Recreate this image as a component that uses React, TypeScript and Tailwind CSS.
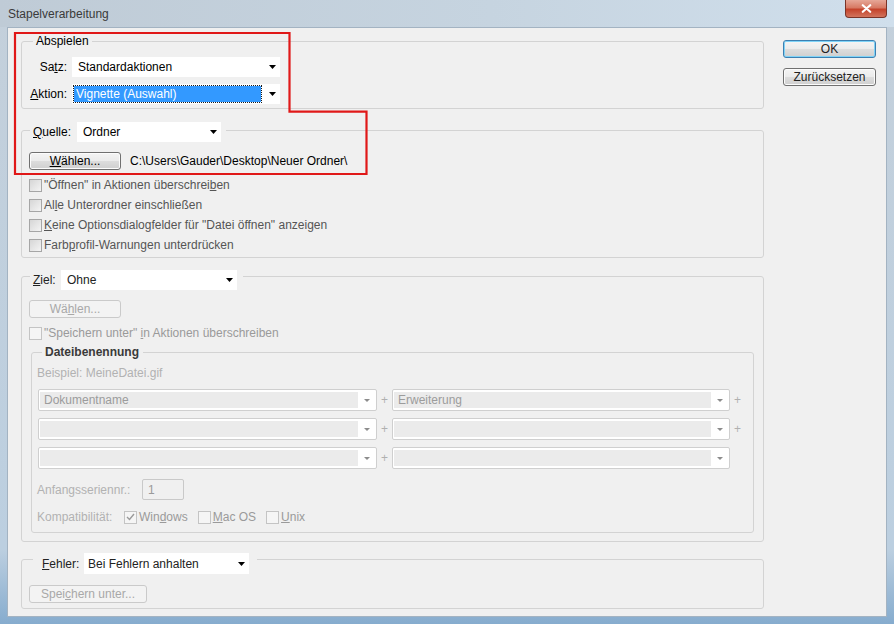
import React from 'react';

const PATH = 'C:\\Users\\Gauder\\Desktop\\Neuer Ordner\\';

function Arrow({ color = '#000', small = false }: { color?: string; small?: boolean }) {
  return small ? (
    <svg width="6" height="3" viewBox="0 0 6 3">
      <path d="M0 0h6L3 3z" fill={color} />
    </svg>
  ) : (
    <svg width="7" height="4" viewBox="0 0 7 4">
      <path d="M0 0h7L3.5 4z" fill={color} />
    </svg>
  );
}

// white photoshop-style combo box
function Combo({ value, className = '', textCls = 'pl-[6px]' }: { value: React.ReactNode; className?: string; textCls?: string }) {
  return (
    <div className={`flex items-center bg-white ${className}`}>
      <span className={`flex-1 truncate ${textCls}`}>{value}</span>
      <span className="flex pr-[4px]">
        <Arrow />
      </span>
    </div>
  );
}

// greyed combo used in the file naming rows
function DimCombo({ value = '', className = '' }: { value?: string; className?: string }) {
  return (
    <div className={`flex h-[22px] rounded-[2px] border border-[#cfcfcf] bg-white px-[1px] py-[2px] ${className}`}>
      <div className="flex flex-1 items-center bg-[#ebebeb] pl-[4px] text-[#9c9c9c]">{value}</div>
      <div className="flex w-[17px] items-center justify-center">
        <Arrow color="#8c8c8c" small />
      </div>
    </div>
  );
}

function Plus({ show = true }: { show?: boolean }) {
  return <span className="w-[15px] text-center text-[#b0b0b0]">{show ? '+' : ''}</span>;
}

function Button({ children, className = '', dim = false }: { children: React.ReactNode; className?: string; dim?: boolean }) {
  return dim ? (
    <div className={`flex h-[18px] items-center justify-center rounded-[3px] border border-[#cacaca] bg-[#f3f3f3] text-[#a8a8a8] ${className}`}>
      {children}
    </div>
  ) : (
    <div
      className={`flex h-[18px] items-center justify-center rounded-[3px] border border-[#707070] bg-[linear-gradient(180deg,#f4f4f4_0%,#ebebeb_50%,#dddddd_51%,#cfcfcf_100%)] shadow-[inset_0_0_0_1px_#fcfcfc] ${className}`}
    >
      {children}
    </div>
  );
}

function Check({ label, dim = false, checked = false, className = '' }: { label: React.ReactNode; dim?: boolean; checked?: boolean; className?: string }) {
  return (
    <div className={`flex items-center gap-[2px] ${className}`}>
      <span
        className={`flex h-[13px] w-[13px] items-center justify-center border ${
          dim ? 'border-[#c4c4c4] bg-[#f5f5f5]' : 'border-[#a6a6a6] bg-[linear-gradient(135deg,#d6d6d6_0%,#f4f4f4_100%)]'
        }`}
      >
        {checked && (
          <svg width="9" height="8" viewBox="0 0 9 8">
            <path d="M1 4l2.5 2.5L8 1" fill="none" stroke="#9a9a9a" strokeWidth="1.4" />
          </svg>
        )}
      </span>
      <span className={dim ? 'text-[#9a9a9a]' : 'text-[#555]'}>{label}</span>
    </div>
  );
}

function Group({ head, headCls, className = '', children }: { head: React.ReactNode; headCls: string; className?: string; children: React.ReactNode }) {
  return (
    <div className={`rounded-[3px] border border-[#d3d3d3] ${className}`}>
      <div className={`flex w-fit items-center bg-[#f0f0f0] ${headCls}`}>{head}</div>
      {children}
    </div>
  );
}

export default function App() {
  return (
    <div className="relative h-[624px] w-[894px] overflow-hidden bg-[linear-gradient(180deg,#c4d0db_0%,#bccfe0_88%,#86acce_100%)] px-[7px] pb-[7px] font-['Liberation_Sans',Arial,sans-serif] text-[12px] leading-[14px] text-black">
      {/* title bar */}
      <div className="-mx-[7px] flex h-[27px] items-start justify-between bg-[linear-gradient(90deg,#bfcbd6_0%,#c6d4e0_55%,#d0dfec_100%)] px-[7px]">
        <span className="pl-[1px] pt-[7px] text-[#3a3a3a]">Stapelverarbeitung</span>
        <div className="flex h-[18px] w-[42px] items-center justify-center rounded-b-[4px] border border-t-0 border-[#7a3428] bg-[linear-gradient(180deg,#e6a797_0%,#d77a64_45%,#c4432b_55%,#d2745d_100%)]">
          <svg width="11" height="9" viewBox="0 0 11 9">
            <path d="M1.8 1.2l7.4 6.6M9.2 1.2L1.8 7.8" stroke="#fff" strokeWidth="2.2" strokeLinecap="round" />
          </svg>
        </div>
      </div>

      {/* client area */}
      <div className="flex h-[590px] border border-[#a3b3c2] bg-[#f0f0f0]">
        <div className="w-[756px] pl-[13px] pt-[13px]">
          {/* Abspielen */}
          <Group head={<span>Abspielen</span>} headCls="-mt-[8px] ml-[11px] px-[3px]" className="pb-[4px]">
            <div className="mt-[9px] flex flex-col gap-[7px] pl-[7px]">
              <div className="flex items-center gap-[5px]">
                <span className="w-[38px] text-right">
                  Sa<u>t</u>z:
                </span>
                <Combo value="Standardaktionen" className="h-[20px] w-[208px]" />
              </div>
              <div className="flex items-center gap-[5px]">
                <span className="w-[38px] text-right">
                  <u>A</u>ktion:
                </span>
                <div className="flex h-[20px] w-[208px] items-center bg-white pl-[2px]">
                  <span className="flex h-[16px] w-[187px] items-center bg-[#3399ff] pl-[2px] text-white outline outline-1 outline-dotted outline-[#1a1a1a]">
                    Vignette (Auswahl)
                  </span>
                  <span className="ml-auto flex pr-[4px]">
                    <Arrow />
                  </span>
                </div>
              </div>
            </div>
          </Group>

          {/* Quelle */}
          <Group
            className="mt-[21px] pb-[2px]"
            headCls="-mt-[9px] ml-[8px] pl-[3px] pr-[5px]"
            head={
              <>
                <span className="w-[44px]">
                  <u>Q</u>uelle:
                </span>
                <Combo value="Ordner" className="h-[20px] w-[144px]" textCls="pl-[6px]" />
              </>
            }
          >
            <div className="pl-[7px]">
              <div className="mt-[10px] flex items-center">
                <Button className="w-[92px]">
                  <span>
                    <u>W</u>ählen...
                  </span>
                </Button>
                <span className="ml-[9px]">{PATH}</span>
              </div>
              <div className="mt-[5px] flex flex-col">
                <Check className="h-[20px]" label={<>"Öffnen" in Aktionen überschrei<u>b</u>en</>} />
                <Check className="h-[20px]" label={<>Al<u>l</u>e Unterordner einschließen</>} />
                <Check className="h-[20px]" label={<><u>K</u>eine Optionsdialogfelder für "Datei öffnen" anzeigen</>} />
                <Check className="h-[20px]" label={<>Farb<u>p</u>rofil-Warnungen unterdrücken</>} />
              </div>
            </div>
          </Group>

          {/* Ziel */}
          <Group
            className="mt-[18px] pb-[8px]"
            headCls="-mt-[7px] ml-[8px] pl-[3px] pr-[6px]"
            head={
              <>
                <span className="w-[28px] text-[#222]">
                  <u>Z</u>iel:
                </span>
                <Combo value="Ohne" className="h-[20px] w-[176px] text-[#222]" />
              </>
            }
          >
            <div className="pl-[7px]">
              <Button dim className="mt-[10px] w-[92px]">
                <span>
                  Wä<u>h</u>len...
                </span>
              </Button>
              <Check dim className="mt-[5px] h-[20px]" label={<>"Speichern unter" <u>i</u>n Aktionen überschreiben</>} />
            </div>

            {/* Dateibenennung */}
            <Group
              className="mx-[9px] mt-[9px] pb-[8px]"
              headCls="-mt-[8px] ml-[10px] pl-[3px] pr-[4px]"
              head={<span className="font-semibold text-[#3a3a3a]">Dateibenennung</span>}
            >
              <div className="pl-[5px]">
                <div className="mt-[7px] text-[#b2b2b2]">Beispiel: MeineDatei.gif</div>
                <div className="ml-[1px] mt-[9px] flex flex-col gap-[7px]">
                  <div className="flex items-center">
                    <DimCombo value="Dokumentname" className="w-[339px]" />
                    <Plus />
                    <DimCombo value="Erweiterung" className="w-[338px]" />
                    <Plus />
                  </div>
                  <div className="flex items-center">
                    <DimCombo className="w-[339px]" />
                    <Plus />
                    <DimCombo className="w-[338px]" />
                    <Plus />
                  </div>
                  <div className="flex items-center">
                    <DimCombo className="w-[339px]" />
                    <Plus />
                    <DimCombo className="w-[338px]" />
                  </div>
                </div>
                <div className="mt-[10px] flex items-center">
                  <span className="w-[105px] text-[#b2b2b2]">Anfangsseriennr.:</span>
                  <div className="flex h-[21px] w-[42px] items-center rounded-[2px] border border-[#c9c9c9] pl-[5px] text-[#9a9a9a]">1</div>
                </div>
                <div className="mt-[10px] flex h-[14px] items-center">
                  <span className="w-[87px] text-[#b2b2b2]">Kompatibilität:</span>
                  <Check dim checked label={<>Win<u>d</u>ows</>} />
                  <Check dim className="ml-[10px]" label={<><u>M</u>ac OS</>} />
                  <Check dim className="ml-[10px]" label={<><u>U</u>nix</>} />
                </div>
              </div>
            </Group>
          </Group>

          {/* Fehler */}
          <Group
            className="mt-[17px] pb-[5px]"
            headCls="-mt-[7px] ml-[11px] pl-[9px] pr-[8px]"
            head={
              <>
                <span className="w-[42px] text-[#222]">
                  <u>F</u>ehler:
                </span>
                <Combo value="Bei Fehlern anhalten" className="h-[21px] w-[165px] text-[#222]" textCls="pl-[4px]" />
              </>
            }
          >
            <div className="pl-[7px]">
              <Button dim className="mt-[11px] w-[118px]">
                <span>
                  Spei<u>c</u>hern unter...
                </span>
              </Button>
            </div>
          </Group>
        </div>

        {/* dialog buttons */}
        <div className="ml-[19px] w-[93px] pt-[12px] text-[#222]">
          <div className="flex h-[18px] items-center justify-center rounded-[3px] border border-[#3c7fb1] bg-[linear-gradient(180deg,#f4f4f4_0%,#ebebeb_50%,#dddddd_51%,#cfcfcf_100%)] shadow-[inset_0_0_0_1px_#7fd3f7]">
            OK
          </div>
          <Button className="mt-[10px]">Zurücksetzen</Button>
        </div>
      </div>

      {/* red highlight outline */}
      <svg className="pointer-events-none absolute left-0 top-0" width="894" height="624" viewBox="0 0 894 624">
        <path d="M15 33H289.5V111.7H366.5V174H15Z" fill="none" stroke="#e01818" strokeWidth="2.2" />
      </svg>
    </div>
  );
}
